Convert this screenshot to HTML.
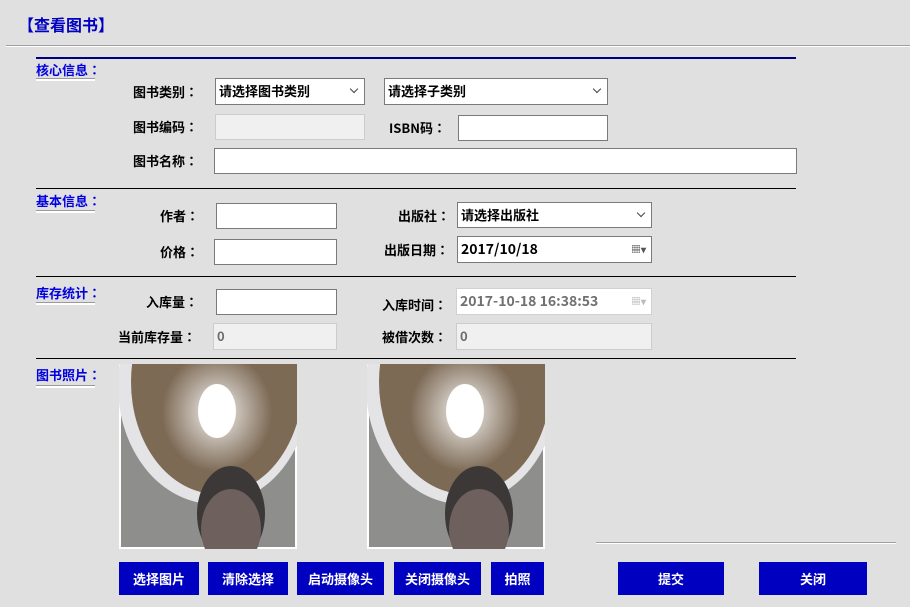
<!DOCTYPE html>
<html><head><meta charset="utf-8"><style>
body{margin:0;width:910px;height:607px;background:#e0e0e0;font-family:"Noto Sans CJK SC","Liberation Sans",sans-serif;position:relative;overflow:hidden}
.a{position:absolute}
.c{font-family:"Noto Sans CJK TC","Noto Sans CJK SC",sans-serif}
.t{font-size:13px;font-weight:bold;color:#000;white-space:nowrap;line-height:16px}
.b{color:#0000e0;font-size:13px;font-weight:bold;line-height:16px}
.in{position:absolute;background:#fff;border:1px solid #7a7a7a;box-sizing:border-box;font-size:13px;font-weight:bold;padding:0 3px;line-height:24px;white-space:nowrap}
.dis{background:#f0f0f0;border-color:#ccc;color:#6d6d6d}
.btn{position:absolute;top:562px;height:33px;background:#0000c0;color:#fff;font-size:13px;font-weight:bold;text-align:center;line-height:33px}
.hl{position:absolute;height:1px;background:#000;left:36px;width:760px}
.ul{position:absolute;height:2px;background:#fff;border-top:1px solid #9a9a9a;left:36px;width:59px}
.chev{position:absolute;right:7px;top:7px;width:5px;height:5px;border-right:1px solid #444;border-bottom:1px solid #444;transform:rotate(45deg)}
</style></head><body>
<div class="a" style="left:18px;top:12px;font-size:16px;font-weight:bold;color:#0000c0;line-height:24px">【查看图书】</div>
<div class="a" style="left:6px;top:45px;width:904px;height:1px;background:#a0a0a0"></div>
<div class="a" style="left:6px;top:46px;width:904px;height:1px;background:#fff"></div>
<div class="hl" style="top:57px;background:#000080;height:2px"></div>

<div class="a b" style="left:36px;top:62px">核心信息<span class="c">：</span></div><div class="ul" style="top:78px"></div>
<div class="a t" style="left:133px;top:84px">图书类别<span class="c">：</span></div>
<div class="in" style="left:215px;top:78px;width:150px;height:27px">请选择图书类别<div class="chev"></div></div>
<div class="in" style="left:384px;top:78px;width:224px;height:27px">请选择子类别<div class="chev"></div></div>
<div class="a t" style="left:133px;top:119px">图书编码<span class="c">：</span></div>
<div class="in dis" style="left:215px;top:114px;width:150px;height:26px"></div>
<div class="a t" style="left:389px;top:120px">ISBN码<span class="c">：</span></div>
<div class="in" style="left:458px;top:115px;width:150px;height:26px"></div>
<div class="a t" style="left:133px;top:153px">图书名称<span class="c">：</span></div>
<div class="in" style="left:214px;top:148px;width:583px;height:26px"></div>

<div class="hl" style="top:188px"></div>
<div class="a b" style="left:36px;top:193px">基本信息<span class="c">：</span></div><div class="ul" style="top:210px"></div>
<div class="a t" style="left:160px;top:208px">作者<span class="c">：</span></div>
<div class="in" style="left:216px;top:203px;width:121px;height:26px"></div>
<div class="a t" style="left:398px;top:208px">出版社<span class="c">：</span></div>
<div class="in" style="left:457px;top:202px;width:195px;height:26px">请选择出版社<div class="chev"></div></div>
<div class="a t" style="left:160px;top:244px">价格<span class="c">：</span></div>
<div class="in" style="left:214px;top:239px;width:123px;height:26px"></div>
<div class="a t" style="left:384px;top:242px">出版日期<span class="c">：</span></div>
<div class="in" style="left:457px;top:236px;width:195px;height:27px;font-size:14px">2017/10/18<span style="position:absolute;right:5px;top:0;font-size:10px;color:#555">▦▾</span></div>

<div class="hl" style="top:276px"></div>
<div class="a b" style="left:36px;top:285px">库存统计<span class="c">：</span></div><div class="ul" style="top:302px"></div>
<div class="a t" style="left:146px;top:294px">入库量<span class="c">：</span></div>
<div class="in" style="left:216px;top:289px;width:121px;height:26px"></div>
<div class="a t" style="left:382px;top:297px">入库时间<span class="c">：</span></div>
<div class="in" style="left:456px;top:288px;width:196px;height:27px;border-color:#d0d0d0;color:#707070;font-size:14px">2017-10-18 16:38:53<span style="position:absolute;right:5px;top:0;font-size:10px;color:#bbb">▦▾</span></div>
<div class="a t" style="left:118px;top:329px">当前库存量<span class="c">：</span></div>
<div class="in dis" style="left:213px;top:323px;width:124px;height:27px">0</div>
<div class="a t" style="left:382px;top:329px">被借次数<span class="c">：</span></div>
<div class="in dis" style="left:456px;top:323px;width:196px;height:27px">0</div>

<div class="hl" style="top:358px"></div>
<div class="a b" style="left:36px;top:367px">图书照片<span class="c">：</span></div><div class="ul" style="top:385px"></div>

<svg class="a" style="left:119px;top:364px" width="178" height="185" viewBox="0 0 178 185">
<defs><radialGradient id="lg" cx="0.5" cy="0.5" r="0.5"><stop offset="0.3" stop-color="#fff"/><stop offset="1" stop-color="#fff" stop-opacity="0"/></radialGradient></defs>
<rect width="178" height="185" fill="#fff"/><rect x="2" y="2" width="174" height="181" fill="#8e8e8c"/>
<ellipse cx="95" cy="22" rx="96" ry="118" fill="#e4e4e6"/>
<ellipse cx="98" cy="18" rx="86" ry="112" fill="#7d6a55"/>
<ellipse cx="98" cy="48" rx="55" ry="60" fill="url(#lg)" opacity="0.65"/>
<ellipse cx="98" cy="47" rx="19" ry="27" fill="#fff"/>
<ellipse cx="112" cy="150" rx="34" ry="48" fill="#3c3838"/>
<ellipse cx="112" cy="165" rx="30" ry="40" fill="#6e605c"/>
</svg>
<svg class="a" style="left:367px;top:364px" width="178" height="185" viewBox="0 0 178 185">
<rect width="178" height="185" fill="#fff"/><rect x="2" y="2" width="174" height="181" fill="#8e8e8c"/>
<ellipse cx="95" cy="22" rx="96" ry="118" fill="#e4e4e6"/>
<ellipse cx="98" cy="18" rx="86" ry="112" fill="#7d6a55"/>
<ellipse cx="98" cy="48" rx="55" ry="60" fill="url(#lg)" opacity="0.65"/>
<ellipse cx="98" cy="47" rx="19" ry="27" fill="#fff"/>
<ellipse cx="112" cy="150" rx="34" ry="48" fill="#3c3838"/>
<ellipse cx="112" cy="165" rx="30" ry="40" fill="#6e605c"/>
</svg>

<div class="a" style="left:596px;top:542px;width:300px;height:1px;background:#a0a0a0"></div>
<div class="a" style="left:596px;top:543px;width:300px;height:1px;background:#fff"></div>

<div class="btn" style="left:119px;width:80px">选择图片</div>
<div class="btn" style="left:208px;width:80px">清除选择</div>
<div class="btn" style="left:297px;width:87px">启动摄像头</div>
<div class="btn" style="left:394px;width:87px">关闭摄像头</div>
<div class="btn" style="left:491px;width:53px">拍照</div>
<div class="btn" style="left:618px;width:106px">提交</div>
<div class="btn" style="left:759px;width:108px">关闭</div>
</body></html>
